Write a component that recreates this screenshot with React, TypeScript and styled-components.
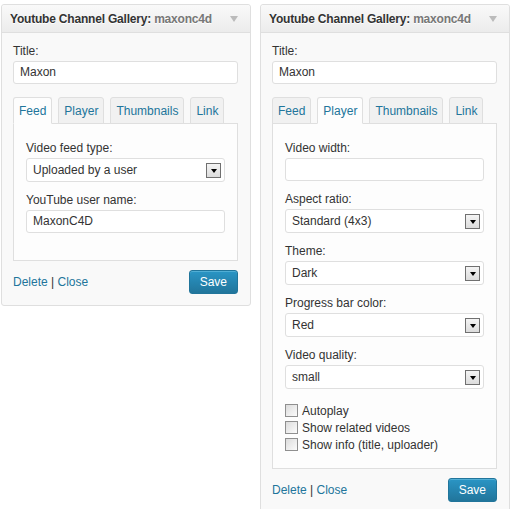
import styled, { createGlobalStyle } from "styled-components";

const GlobalStyle = createGlobalStyle`
  html, body {
    margin: 0;
    padding: 0;
    background: #ffffff;
    font-family: "Liberation Sans", Arial, sans-serif;
  }
`;

const Page = styled.div`
  display: flex;
  align-items: flex-start;
  gap: 9px;
  padding: 4px 0 0 1px;
`;

const Widget = styled.div`
  width: 250px;
  box-sizing: border-box;
  border: 1px solid #dfdfdf;
  border-radius: 3px;
  background: #f9f9f9;
  box-shadow: 0 1px 0 #fff inset;
`;

const WidgetHeader = styled.div`
  height: 27px;
  display: flex;
  align-items: center;
  justify-content: space-between;
  padding: 0 12px 0 8px;
  background: linear-gradient(to bottom, #f9f9f9, #ececec);
  border-bottom: 1px solid #dfdfdf;
  border-radius: 3px 3px 0 0;
  font-size: 12px;
  letter-spacing: -0.2px;
  font-weight: bold;
  color: #333;
  text-shadow: 0 1px 0 #fff;
`;

const InWidgetTitle = styled.span`
  color: #777;
`;

const Arrow = styled.span`
  width: 0;
  height: 0;
  border-left: 4px solid transparent;
  border-right: 4px solid transparent;
  border-top: 6px solid #bbb;
`;

const WidgetBody = styled.div`
  padding: 10px 12px 11px 11px;
`;

const Label = styled.div`
  font-size: 12px;
  color: #333;
  line-height: 16px;
  margin-bottom: 2px;
`;

const TextInput = styled.div`
  box-sizing: border-box;
  height: 23px;
  background: #fff;
  border: 1px solid #dfdfdf;
  border-radius: 3px;
  padding: 0 6px;
  font-size: 12px;
  line-height: 21px;
  color: #333;
`;

const Field = styled.div`
  margin-bottom: 10px;
`;

const Tabs = styled.div`
  display: flex;
  gap: 6px;
  margin-top: 13px;
  position: relative;
  z-index: 1;
`;

const Tab = styled.div<{ $active?: boolean }>`
  height: 27px;
  box-sizing: border-box;
  padding: 0 5px;
  border: 1px solid #dfdfdf;
  border-bottom-color: ${(p) => (p.$active ? "#fdfdfd" : "#dfdfdf")};
  border-radius: 3px 3px 0 0;
  background: ${(p) => (p.$active ? "#fdfdfd" : "#f1f1f1")};
  font-size: 12px;
  line-height: 27px;
  color: #21759b;
  margin-bottom: -1px;
`;

const TabPanel = styled.div`
  background: #fdfdfd;
  border: 1px solid #dfdfdf;
  padding: 16px 12px 17px 12px;
`;

const SelectBox = styled.div`
  box-sizing: border-box;
  height: 24px;
  display: flex;
  align-items: center;
  justify-content: space-between;
  background: #fff;
  border: 1px solid #dfdfdf;
  border-radius: 3px;
  padding: 0 3px 0 6px;
  font-size: 12px;
  color: #333;
`;

const DropButton = styled.span`
  width: 15px;
  height: 15px;
  box-sizing: border-box;
  border: 1px solid #707070;
  background: linear-gradient(to bottom, #f4f4f4, #dcdcdc);
  display: flex;
  align-items: center;
  justify-content: center;
  &::after {
    content: "";
    width: 0;
    height: 0;
    border-left: 3.5px solid transparent;
    border-right: 3.5px solid transparent;
    border-top: 4px solid #000;
    margin-top: 1px;
  }
`;

const CheckRow = styled.label`
  display: flex;
  align-items: center;
  gap: 4px;
  font-size: 12px;
  color: #333;
  height: 17px;
`;

const CheckBox = styled.span`
  width: 13px;
  height: 13px;
  box-sizing: border-box;
  border: 1px solid #8f8f8f;
  background: linear-gradient(to bottom right, #dcdcdc, #fbfbfb);
`;

const Checks = styled.div`
  padding-top: 3px;
  margin-bottom: -2px;
`;

const Footer = styled.div`
  display: flex;
  align-items: center;
  justify-content: space-between;
  margin-top: 9px;
  font-size: 12px;
  color: #333;
`;

const Link = styled.a`
  color: #21759b;
  text-decoration: none;
`;

const SaveButton = styled.button`
  height: 24px;
  padding: 0 10px;
  border: 1px solid #21759b;
  border-radius: 3px;
  background: linear-gradient(to bottom, #2a95c5, #21759b);
  color: #fff;
  font-family: "Liberation Sans", Arial, sans-serif;
  font-size: 12px;
  box-shadow: 0 1px 0 rgba(120, 200, 230, 0.5) inset;
`;

const Select = ({ value }: { value: string }) => (
  <SelectBox>
    <span>{value}</span>
    <DropButton />
  </SelectBox>
);

const tabNames = ["Feed", "Player", "Thumbnails", "Link"];

const WidgetFrame = ({
  active,
  children,
}: {
  active: string;
  children: React.ReactNode;
}) => (
  <Widget>
    <WidgetHeader>
      <span>
        Youtube Channel Gallery: <InWidgetTitle>maxonc4d</InWidgetTitle>
      </span>
      <Arrow />
    </WidgetHeader>
    <WidgetBody>
      <Label>Title:</Label>
      <TextInput>Maxon</TextInput>
      <Tabs>
        {tabNames.map((t) => (
          <Tab key={t} $active={t === active}>
            {t}
          </Tab>
        ))}
      </Tabs>
      <TabPanel>{children}</TabPanel>
      <Footer>
        <span>
          <Link href="#">Delete</Link> | <Link href="#">Close</Link>
        </span>
        <SaveButton>Save</SaveButton>
      </Footer>
    </WidgetBody>
  </Widget>
);

const App = () => (
  <>
    <GlobalStyle />
    <Page>
      <WidgetFrame active="Feed">
        <Field>
          <Label>Video feed type:</Label>
          <Select value="Uploaded by a user" />
        </Field>
        <Field>
          <Label>YouTube user name:</Label>
          <TextInput>MaxonC4D</TextInput>
        </Field>
      </WidgetFrame>
      <WidgetFrame active="Player">
        <Field>
          <Label>Video width:</Label>
          <TextInput />
        </Field>
        <Field>
          <Label>Aspect ratio:</Label>
          <Select value="Standard (4x3)" />
        </Field>
        <Field>
          <Label>Theme:</Label>
          <Select value="Dark" />
        </Field>
        <Field>
          <Label>Progress bar color:</Label>
          <Select value="Red" />
        </Field>
        <Field>
          <Label>Video quality:</Label>
          <Select value="small" />
        </Field>
        <Checks>
          <CheckRow>
            <CheckBox /> Autoplay
          </CheckRow>
          <CheckRow>
            <CheckBox /> Show related videos
          </CheckRow>
          <CheckRow>
            <CheckBox /> Show info (title, uploader)
          </CheckRow>
        </Checks>
      </WidgetFrame>
    </Page>
  </>
);

export default App;
